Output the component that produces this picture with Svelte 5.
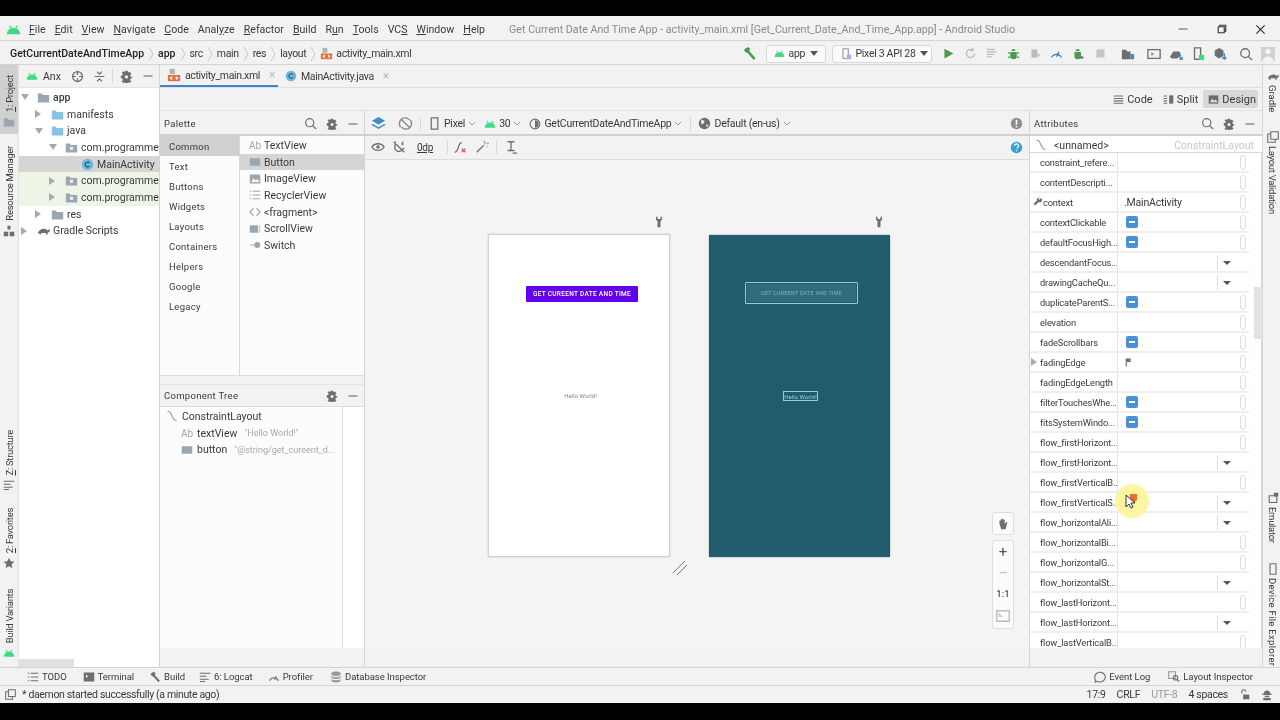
<script>
  const g = '#6e6e6e';
  // every icon is a list of [path, fill, stroke] on a 16x16 box
  const icons = {
    android: [['M1 13a7 7 0 0 1 14 0z', '#3ddc84'], ['M4 4 5.500 6.500M12 4 10.500 6.500', 'none', '#3ddc84']],
    folder: [['M1 3h5l1 2h8v9H1z', '#9aa7b0']],
    blue: [['M1 3h5l1 2h8v9H1z', '#87c3e8']],
    pkg: [['M1 3h5l1 2h8v9H1z', '#9aa7b0'], ['M6 7h4v4H6z', '#e8ecee']],
    xml: [['M3 1h6v6H3z', '#b3b3b3'], ['M1 8h14v7H1z', '#e2703a'], ['M6 10 4 11.500 6 13M10 10l2 1.500L10 13', 'none', '#fff']],
    cls: [['M1 8a7 7 0 1 0 14 0a7 7 0 1 0-14 0', '#6db6dc'], ['M10.500 6a3 3 0 1 0 0 4', 'none', '#1f5f80']],
    target: [['M2 8a6 6 0 1 0 12 0a6 6 0 1 0-12 0M8 1v5M8 10v5M1 8h5M10 8h5', 'none', g]],
    collapse: [['M2 8h12M5 2l3 3 3-3M5 14l3-3 3 3', 'none', g]],
    gear: [['M6.500 1h3l.5 2 2-1 2 2.500-1.500 1.500.5 2 2 .5v1.500l-2 .5-.5 2 1.500 1.500-2 2-2-1-.5 2h-3l-.5-2-2 1-2-2 1.500-1.500-.5-2-2-.5V7l2-.5.5-2L2 3l2-1.500 2 1z', g], ['M6 8.500a2 2 0 1 0 4 0a2 2 0 1 0-4 0', '#f2f2f2']],
    minus: [['M2 8h12', 'none', g]],
    search: [['M2 7a5 5 0 1 0 10 0a5 5 0 1 0-10 0M10.500 10.500 15 15', 'none', g]],
    hammer: [['M2 4 6 1l3 2-1.500 2 7 8-2 2-7-8L4 7z', '#4c9a4c']],
    hammerg: [['M2 4 6 1l3 2-1.500 2 7 8-2 2-7-8L4 7z', g]],
    play: [['M3 2 14 8 3 14z', '#4c9a4c']],
    rerun: [['M13 8a5 5 0 1 1-2-4M11 1v3.500H7.500', 'none', '#bbb']],
    lines: [['M2 3h10M2 6h12M2 9h9M2 12h7', 'none', '#bbb']],
    bug: [['M4 6h8v5a4 4 0 0 1-8 0zM5.500 5a2.500 2.500 0 0 1 5 0z', '#4c9a4c'], ['M1 7l3 1M15 7l-3 1M1 13l3-1M15 13l-3-1', 'none', '#4c9a4c']],
    attach: [['M3 3h7v10H3z', '#bbb'], ['M10 7l5 3-5 3z', '#ccc']],
    gauge: [['M2 13a6.500 6.500 0 0 1 12 0M8 12l3-6', 'none', '#2f7fb5']],
    gaugeg: [['M2 13a6.500 6.500 0 0 1 12 0M9 12l2-5', 'none', g]],
    bugrun: [['M3 6h8v5a4 4 0 0 1-8 0zM4.500 5a2.500 2.500 0 0 1 5 0z', '#4c9a4c'], ['M10 10l5 3-4 2z', g]],
    stop: [['M3 3h10v10H3z', '#c6c6c6']],
    struct: [['M1 3h5l1 2h4v9H1z', g], ['M11 8h4v6h-4z', '#3b8fc4']],
    term: [['M1 3h14v10H1z', 'none', g], ['M5 6l3 2-3 2z', '#3b8fc4']],
    sync: [['M1 11l4-6h7l2 5-5 3H3z', g], ['M10 9l5 5M15 11v3h-3', 'none', '#3b8fc4']],
    device: [['M4 1h7v13H4z', 'none', g], ['M9 9h6v6H9z', '#3ddc84']],
    devgrey: [['M4 1h7v13H4z', 'none', '#999'], ['M9 9h6v6H9z', '#aab4e0']],
    emu: [['M3 5h10v9H3z', 'none', g], ['M9 1h6v5H9z', g]],
    sdk: [['M2 4l5-3 5 3v6l-5 3-5-3z', g], ['M13 7v7M10.500 11.500 13 14l2.500-2.500', 'none', '#3b8fc4']],
    user: [['M0 0h16v16H0z', '#d0d0d0'], ['M5 5a3 3 0 1 0 6 0a3 3 0 1 0-6 0M2 16c0-7 12-7 12 0z', '#f4f4f4']],
    layers: [['M8 1l7 4-7 4-7-4z', '#3b8fc4'], ['M1 9l7 4 7-4', 'none', '#3b8fc4']],
    rotate: [['M3 12a6 6 0 0 1 9-8M13 4a6 6 0 0 1-9 8M4 4l8 8', 'none', '#888']],
    phone: [['M4 1h8v14H4z', 'none', g]],
    theme: [['M1.500 8a6.500 6.500 0 1 0 13 0a6.500 6.500 0 1 0-13 0', 'none', g], ['M8 3a5 5 0 0 1 0 10z', g]],
    globe: [['M1 8a7 7 0 1 0 14 0a7 7 0 1 0-14 0', g], ['M4 3l4 2-1 3-3 1zM10 9l3 1-2 3z', '#f2f2f2']],
    eye: [['M1 8c3-5 11-5 14 0c-3 5-11 5-14 0z', 'none', g], ['M6 8a2 2 0 1 0 4 0a2 2 0 1 0-4 0', g]],
    magnet: [['M4 2l-1 7a5 5 0 0 0 8 3l3-3M2 2l12 12', 'none', g], ['M11 2h2v4h-2z', '#3b8fc4']],
    curve: [['M2 14c5 0 3-11 8-11', 'none', g], ['M10 10l4 4M14 10l-4 4', 'none', '#d9534f']],
    wand: [['M2 14l8-8', 'none', g], ['M11 2v3M13 4h3M10 1l1 1M13 7l1 1', 'none', '#8bbf8b']],
    margin: [['M4 2h8M8 2v10M4 12h8M10 15h5', 'none', g]],
    info: [['M1 8a7 7 0 1 0 14 0a7 7 0 1 0-14 0', '#8c8c8c'], ['M7 3.500h2v6H7zM7 11h2v2H7z', '#fff']],
    help: [['M1 8a7 7 0 1 0 14 0a7 7 0 1 0-14 0', '#389fd6'], ['M5.500 6a2.500 2.500 0 1 1 3.500 2.300V9.500M8 11v1.500', 'none', '#fff']],
    widget: [['M1 3h14v10H1z', '#9aa7b0']],
    image: [['M1 2h14v12H1z', '#9aa7b0'], ['M3 12l3-5 3 3 2-2 3 4z', '#fff']],
    designico: [['M1 2h14v12H1z', g], ['M3 12l3-5 3 3 2-2 3 4z', '#e4e4e4']],
    list: [['M5 3h10M5 8h10M5 13h10M1 3h2M1 8h2M1 13h2', 'none', '#9aa7b0']],
    code: [['M6 3 1 8l5 5M10 3l5 5-5 5', 'none', '#9aa7b0']],
    scroll: [['M1 3h11v10H1z', '#9aa7b0'], ['M13 3h2v10h-2z', '#c3ccd2']],
    toggle: [['M1 7h8v2H1z', '#c3ccd2'], ['M7 8a4 4 0 1 0 8 0a4 4 0 1 0-8 0', '#9aa7b0']],
    constraint: [['M2 2h2c3 0 2 4 4 6s1 6 6 6', 'none', '#8a9aa5']],
    wrench: [['M14 2l-3 3-2-2 3-2a4 4 0 0 0-5 5L1 12l3 3 6-6a4 4 0 0 0 4-7z', g]],
    flag: [['M3 1h10l-2 3 2 3H5v8H3z', g]],
    tortoise: [['M1 12c1-6 9-8 12-4l2-2 1 3-3 2v2h-2v-2H5v2H3v-2z', g]],
    resource: [['M6 1h4v5H6zM1 9h6v6H1zM9 9h6v6H9z', g]],
    star: [['M8 1l2.200 4.700 5 .6-3.700 3.400 1 5L8 12.300 3.500 14.700l1-5L.8 6.300l5-.6z', g]],
    hand: [['M4 8V4h1.500v3V2.500H7V7V2h1.500v5V3H10v5l1.500-2H13l-2 8H6z', g]],
    fit: [['M1 2h14v12H1z', 'none', '#bbb'], ['M3 4l5 5H3z', '#ccc']],
    wrenchv: [['M4 1v4l2 2v8h4V7l2-2V1h-2v3H6V1z', g]],
    todo: [['M1 3h2M1 8h2M1 13h2M5 3h10M5 8h10M5 13h10', 'none', g]],
    burger: [['M1 3h14M1 6.500h14M1 10h14M1 13.500h14', 'none', g]],
    split: [['M1 3h5M1 6.500h5M1 10h5M1 13.500h5', 'none', g], ['M9 2h6v12H9z', g]],
    termb: [['M1 2h14v12H1z', g], ['M4 5l3 2-3 2z', '#fff']],
    logcat: [['M1 3h14M1 7h9M1 11h12M1 14h7', 'none', g]],
    db: [['M2 3c0-3 12-3 12 0v10c0 3-12 3-12 0z', '#9a9a9a'], ['M2 6c3 2 9 2 12 0M2 10c3 2 9 2 12 0', 'none', '#f2f2f2']],
    log: [['M1 8a7 6.500 0 1 1 3 5.500L2 15z', 'none', g]],
    inspect: [['M1 1h9v9H1z', 'none', '#999'], ['M7 9a3 3 0 1 0 6 0a3 3 0 1 0-6 0M12 11l3 3', 'none', g]],
    copy: [['M5 1h10v10H5zM5 4H1v11h10v-4', 'none', g]],
    lock: [['M4 7V4a3 3 0 0 1 6 0', 'none', g], ['M6 8h9v7H6z', g]],
    hector: [['M4 6a4 4 0 0 1 8 0zM2 6h12v2H2zM5 9h6v2H5zM3 12h10v3H3z', g]],
    win: [['M3 5h8v8H3z', 'none', '#333'], ['M5 5V3h8v8h-2', 'none', '#333']],
    close: [['M2 2l12 12M14 2 2 14', 'none', '#222']]
  };

  const menu = [['', 'F', 'ile'], ['', 'E', 'dit'], ['', 'V', 'iew'], ['', 'N', 'avigate'], ['', 'C', 'ode'], ['Anal', 'y', 'ze'], ['', 'R', 'efactor'], ['', 'B', 'uild'], ['R', 'u', 'n'], ['', 'T', 'ools'], ['VC', 'S', ''], ['', 'W', 'indow'], ['', 'H', 'elp']];
  const crumbs = ['src', 'main', 'res', 'layout'];
  const runIcons = ['play', 'rerun', 'lines', 'bug', 'attach', 'gauge', 'bugrun', 'stop'];
  const toolIcons = ['struct', 'term', 'sync', 'device', 'sdk'];

  const tree = [
    { label: 'app', indent: 6, arrow: 'open', icon: 'folder', bold: true },
    { label: 'manifests', indent: 20, arrow: 'closed', icon: 'blue' },
    { label: 'java', indent: 20, arrow: 'open', icon: 'blue' },
    { label: 'com.programmer', indent: 34, arrow: 'open', icon: 'pkg' },
    { label: 'MainActivity', indent: 50, icon: 'cls', sel: true },
    { label: 'com.programmer', indent: 34, arrow: 'closed', icon: 'pkg', test: true },
    { label: 'com.programmer', indent: 34, arrow: 'closed', icon: 'pkg', test: true },
    { label: 'res', indent: 20, arrow: 'closed', icon: 'folder' },
    { label: 'Gradle Scripts', indent: 6, arrow: 'closed', icon: 'tortoise' }
  ];
  const categories = ['Common', 'Text', 'Buttons', 'Widgets', 'Layouts', 'Containers', 'Helpers', 'Google', 'Legacy'];
  const widgets = [['TextView', 'abc'], ['Button', 'widget'], ['ImageView', 'image'], ['RecyclerView', 'list'], ['<fragment>', 'code'], ['ScrollView', 'scroll'], ['Switch', 'toggle']];

  const P = 'pill', D = 'drop', T = 'toggle';
  const attrs = [
    ['constraint_refere...', P], ['contentDescripti...', P], ['context', P, '.MainActivity'], ['contextClickable', T],
    ['defaultFocusHigh...', T], ['descendantFocus...', D], ['drawingCacheQu...', D], ['duplicateParentS...', T],
    ['elevation', P], ['fadeScrollbars', T], ['fadingEdge', 'flag'], ['fadingEdgeLength', P],
    ['filterTouchesWhe...', T], ['fitsSystemWindo...', T], ['flow_firstHorizont...', P], ['flow_firstHorizont...', D],
    ['flow_firstVerticalB...', P], ['flow_firstVerticalS...', D], ['flow_horizontalAli...', D], ['flow_horizontalBi...', P],
    ['flow_horizontalG...', P], ['flow_horizontalSt...', D], ['flow_lastHorizont...', P], ['flow_lastHorizont...', D],
    ['flow_lastVerticalB...', P]
  ];
  const bottomLeft = [['todo', 'TODO', 8], ['termb', 'Terminal', 16], ['hammerg', 'Build', 15], ['logcat', '6: Logcat', 14], ['gaugeg', 'Profiler', 15], ['db', 'Database Inspector', 17]];
</script>

{#snippet ico(name, size = 14)}
  <svg class="ico" width={size} height={size} viewBox="0 0 16 16" stroke-width="1.500">
    {#each icons[name] as [d, fill, stroke]}
      <path {d} {fill} stroke={stroke || 'none'} />
    {/each}
  </svg>
{/snippet}

{#snippet chevron()}
  <svg class="ico" width="8" height="5" viewBox="0 0 8 5"><path d="M1 1l3 3 3-3" fill="none" stroke="#999" /></svg>
{/snippet}

{#snippet navsep()}
  <svg class="ico sep" width="6" height="16" viewBox="0 0 6 16"><path d="M1 1l4 7-4 7" fill="none" stroke="#c8c8c8" /></svg>
{/snippet}

<div class="window">
  <header class="menubar">
    <span class="logo">{@render ico('android', 15)}</span>
    {#each menu as [a, u, b]}
      <span class="menuitem">{a}<u>{u}</u>{b}</span>
    {/each}
    <span class="title">Get Current Date And Time App - activity_main.xml [Get_Current_Date_And_Time_App.app] - Android Studio</span>
    <div class="winctl">
      <span>{@render ico('minus', 12)}</span>
      <span>{@render ico('win', 12)}</span>
      <span>{@render ico('close', 11)}</span>
    </div>
  </header>

  <nav class="navbar">
    <b>GetCurrentDateAndTimeApp</b>{@render navsep()}
    <b>app</b>{@render navsep()}
    {#each crumbs as c}
      <span class="crumb">{c}</span>{@render navsep()}
    {/each}
    {@render ico('xml', 13)}<span class="crumb xmlname">activity_main.xml</span>
    <div class="runbar">
      <span class="hammer">{@render ico('hammer', 15)}</span>
      <div class="combo app-combo">{@render ico('android', 11)}<span>app</span><i class="tri"></i></div>
      <div class="combo dev-combo">{@render ico('devgrey', 12)}<span>Pixel 3 API 28</span><i class="tri"></i></div>
      <div class="iconrow run">{#each runIcons as n}<span>{@render ico(n, 13)}</span>{/each}</div>
      <div class="iconrow tools">{#each toolIcons as n, i}<span class:wide={i === 0}>{@render ico(n, 14)}</span>{/each}</div>
      <span class="navsearch">{@render ico('search', 14)}</span>
      {@render ico('user', 14)}
    </div>
  </nav>

  <main class="middle">
    <aside class="stripe left">
      <div class="vtab active">{@render ico('folder', 12)}<span><u>1</u>: Project</span></div>
      <div class="vtab res">{@render ico('resource', 12)}<span>Resource Manager</span></div>
      <div class="vtab struct">{@render ico('logcat', 12)}<span><u>Z</u>: Structure</span></div>
      <div class="vtab fav">{@render ico('star', 12)}<span><u>2</u>: Favorites</span></div>
      <div class="vtab var">{@render ico('android', 12)}<span>Build Variants</span></div>
    </aside>

    <section class="project">
      <div class="projhead">
        {@render ico('android', 12)}
        <span class="projname">Anx</span>
        <span class="projicons">
          {@render ico('target', 13)}
          {@render ico('collapse', 13)}
          <i class="vline"></i>
          {@render ico('gear', 13)}
          {@render ico('minus', 12)}
        </span>
      </div>
      <div class="tree">
        {#each tree as row}
          <div class="treerow" class:sel={row.sel} class:test={row.test} class:bold={row.bold} style="padding-left:{row.indent}px">
            <span class="arrow {row.arrow || ''}"></span>
            {@render ico(row.icon, 13)}
            <span class="treelabel">{row.label}</span>
          </div>
        {/each}
      </div>
      <div class="hscroll"></div>
    </section>

    <section class="editor">
      <div class="tabs">
        <div class="tab current">{@render ico('xml', 14)}<span>activity_main.xml</span><em>×</em></div>
        <div class="tab">{@render ico('cls', 12)}<span>MainActivity.java</span><em>×</em></div>
      </div>
      <div class="modes">
        <span class="mode">{@render ico('burger', 11)}Code</span>
        <span class="mode">{@render ico('split', 11)}Split</span>
        <span class="mode on">{@render ico('designico', 11)}Design</span>
      </div>

      <div class="workspace">
        <div class="leftcol">
          <div class="palette">
            <div class="panelhead">
              <span class="paneltitle">Palette</span>
              <span class="panelicons">{@render ico('search', 13)}{@render ico('gear', 12)}{@render ico('minus', 12)}</span>
            </div>
            <div class="palbody">
              <ul class="cats">
                {#each categories as c, i}<li class:on={i === 0}>{c}</li>{/each}
              </ul>
              <ul class="widgets">
                {#each widgets as [w, n], i}
                  <li class:on={i === 1}>{#if n === 'abc'}<span class="ab">Ab</span>{:else}{@render ico(n, 12)}{/if}<span>{w}</span></li>
                {/each}
              </ul>
            </div>
          </div>
          <div class="comptree">
            <div class="panelhead">
              <span class="paneltitle">Component Tree</span>
              <span class="panelicons">{@render ico('gear', 12)}{@render ico('minus', 12)}</span>
            </div>
            <div class="compbody">
              <div class="complist">
                <div class="comprow root">{@render ico('constraint', 12)}<span>ConstraintLayout</span></div>
                <div class="comprow"><span class="ab">Ab</span><span>textView</span><small>"Hello World!"</small></div>
                <div class="comprow">{@render ico('widget', 12)}<span>button</span><small>"@string/get_cureent_d...</small></div>
              </div>
              <div class="compside"></div>
            </div>
          </div>
        </div>

        <div class="design">
          <div class="dbar">
            <span class="dgroup first">{@render ico('layers', 15)}{@render ico('rotate', 15)}</span>
            <i class="vline"></i>
            <span class="ditem">{@render ico('phone', 13)}Pixel{@render chevron()}</span>
            <span class="ditem">{@render ico('android', 12)}30{@render chevron()}</span>
            <span class="ditem">{@render ico('theme', 12)}GetCurrentDateAndTimeApp{@render chevron()}</span>
            <i class="vline"></i>
            <span class="ditem">{@render ico('globe', 13)}Default (en-us){@render chevron()}</span>
            <span class="dright">{@render ico('info', 13)}</span>
          </div>
          <div class="dbar second">
            <span class="dgroup first">{@render ico('eye', 14)}{@render ico('magnet', 14)}</span>
            <span class="zerodp">0dp</span>
            <i class="vline pull"></i>
            <span class="dgroup">{@render ico('curve', 14)}{@render ico('wand', 14)}</span>
            <i class="vline"></i>
            {@render ico('margin', 14)}
            <span class="dright">{@render ico('help', 13)}</span>
          </div>
          <div class="canvas">
            <div class="pin p1">{@render ico('wrenchv', 12)}</div>
            <div class="pin p2">{@render ico('wrenchv', 12)}</div>
            <div class="phonebox light">
              <div class="appbtn">GET CUREENT DATE AND TIME</div>
              <div class="hello">Hello World!</div>
            </div>
            <div class="phonebox blueprint">
              <div class="appbtn">GET CUREENT DATE AND TIME</div>
              <div class="hello">Hello World!</div>
            </div>
            <svg class="resizer" width="16" height="16" viewBox="0 0 16 16"><path d="M1 13 13 1M5 15 15 5" stroke="#777" fill="none" /></svg>
            <div class="zoombox hand">{@render ico('hand', 14)}</div>
            <div class="zoombox zoom">
              <span class="plus">+</span>
              <span class="dash">–</span>
              <span class="one">1:1</span>
              {@render ico('fit', 14)}
            </div>
          </div>
        </div>

        <div class="attributes">
          <div class="panelhead">
            <span class="paneltitle">Attributes</span>
            <span class="panelicons">{@render ico('search', 13)}{@render ico('gear', 12)}{@render ico('minus', 12)}</span>
          </div>
          <div class="unnamed">{@render ico('constraint', 12)}<span>&lt;unnamed&gt;</span><em>ConstraintLayout</em></div>
          <div class="attrwrap">
            <div class="attrlist">
              {#each attrs as [name, kind, value]}
                <div class="attrrow">
                  <div class="attrname">
                    {#if value}<span class="wr">{@render ico('wrench', 9)}</span>{/if}
                    {#if kind === 'flag'}<span class="expand"></span>{/if}
                    <span>{name}</span>
                  </div>
                  <div class="attrvalue">
                    {#if value}<span class="val">{value}</span>{/if}
                    {#if kind === T}<span class="tog"></span>{/if}
                    {#if kind === 'flag'}<span class="flag">{@render ico('flag', 9)}</span>{/if}
                    {#if kind === D}
                      <span class="drop"><i class="tri small"></i></span>
                    {:else}
                      <span class="pillmark"></span>
                    {/if}
                  </div>
                </div>
              {/each}
            </div>
            <div class="vscroll"><i></i></div>
          </div>
          <div class="attrfoot"></div>
        </div>
      </div>
    </section>

    <aside class="stripe right">
      <div class="rtab gradle">{@render ico('tortoise', 12)}<span>Gradle</span></div>
      <div class="rtab valid">{@render ico('copy', 12)}<span>Layout Validation</span></div>
      <div class="rtab emu">{@render ico('emu', 12)}<span>Emulator</span></div>
      <div class="rtab dfe">{@render ico('phone', 12)}<span>Device File Explorer</span></div>
    </aside>
  </main>

  <div class="toolbar">
    {#each bottomLeft as [n, t, gap]}
      <span class="tw" style="margin-left:{gap}px">{@render ico(n, 12)}{t}</span>
    {/each}
    <span class="twright">
      <span class="tw">{@render ico('log', 12)}Event Log</span>
      <span class="tw li">{@render ico('inspect', 12)}Layout Inspector</span>
    </span>
  </div>

  <footer class="status">
    {@render ico('copy', 11)}
    <span class="msg">* daemon started successfully (a minute ago)</span>
    <span class="stright">
      <span>17:9</span><span>CRLF</span><span class="dim">UTF-8</span><span>4 spaces</span>
      {@render ico('lock', 11)}
      {@render ico('hector', 12)}
    </span>
  </footer>

  <div class="cursorspot">
    <svg width="18" height="18" viewBox="0 0 18 18">
      <path d="M7 2h7v6l-3.500 3L7 8z" fill="#e8702a" />
      <path d="M3 3v12l3-3 2 4 2-1-2-4h4z" fill="#fff" stroke="#333" />
    </svg>
  </div>
</div>

<style>
  :global(body) { background: #000; }
  * { box-sizing: border-box; }
  ul { list-style: none; margin: 0; padding: 0; }
  .ico { flex: none; display: block; }

  .window {
    position: relative;
    margin-top: 16px;
    width: 1280px;
    height: 687px;
    display: flex;
    flex-direction: column;
    overflow: hidden;
    background: #f2f2f2;
    color: #3a3a3a;
    font-family: Roboto, "Noto Sans", sans-serif;
    font-size: 10.500px;
    filter: blur(.3px);
  }

  .menubar {
    height: 25px;
    flex: none;
    display: flex;
    align-items: center;
    padding: 2px 0 0 6px;
    border-bottom: 1px solid #d4d4d4;
    font-size: 10.600px;
  }
  .logo { width: 23px; }
  .menuitem { margin-right: 9px; white-space: nowrap; }
  .title { margin-left: 15px; color: #8a8a8a; white-space: nowrap; font-size: 10.700px; }
  .winctl { margin-left: auto; display: flex; align-items: center; padding-right: 14px; }
  .winctl span { margin-left: 27px; }

  .navbar {
    height: 24px;
    flex: none;
    display: flex;
    align-items: center;
    padding: 2px 0 0 10px;
    border-bottom: 1px solid #d4d4d4;
    white-space: nowrap;
  }
  .navbar b { font-weight: 500; color: #222; }
  .crumb { letter-spacing: -.35px; }
  .sep { margin: 0 4px 0 4px; }
  .xmlname { margin-left: 3px; }
  .runbar { margin-left: auto; display: flex; align-items: center; padding-right: 5px; }
  .hammer { margin-right: 9px; }
  .combo {
    height: 18px;
    display: flex;
    align-items: center;
    gap: 4px;
    padding: 0 7px;
    background: #fafafa;
    border: 1px solid #d8d8d8;
    border-radius: 3px;
    font-size: 10.500px;
    letter-spacing: -.3px;
    margin-right: 6px;
  }
  .app-combo { width: 60px; }
  .dev-combo { width: 100px; }
  .tri { display: block; margin-left: auto; width: 0; height: 0; border-left: 4px solid transparent; border-right: 4px solid transparent; border-top: 5px solid #555; }
  .tri.small { border-width: 4px 4px 0; margin: 0; }
  .iconrow { display: flex; align-items: center; }
  .run span { width: 21.700px; display: flex; justify-content: center; }
  .tools { margin-left: 6px; }
  .tools span { width: 22px; display: flex; justify-content: center; }
  .tools .wide { margin-right: 4px; }
  .navsearch { margin: 0 8px 0 8px; }

  .middle { flex: 1; min-height: 0; display: flex; }
  .stripe { flex: none; position: relative; background: #f2f2f2; font-size: 9.500px; }
  .stripe.left { width: 19px; border-right: 1px solid #e2e2e2; letter-spacing: -.3px; }
  .stripe.right { width: 18px; border-left: 1px solid #d8d8d8; }
  .vtab { position: absolute; left: 0; width: 18px; display: flex; flex-direction: column-reverse; align-items: center; gap: 4px; padding: 3px 0; }
  .vtab span { writing-mode: vertical-rl; transform: rotate(180deg); white-space: nowrap; }
  .vtab.active { top: 0; height: 69px; background: #d0d0d0; padding-top: 10px; justify-content: flex-end; }
  .vtab.res { top: 78px; }
  .vtab.struct { top: 362px; }
  .vtab.fav { top: 440px; }
  .vtab.var { top: 521px; }
  .rtab { position: absolute; left: 1px; width: 17px; display: flex; flex-direction: column; align-items: center; gap: 3px; }
  .rtab span { writing-mode: vertical-rl; white-space: nowrap; }
  .rtab.gradle { top: 5px; }
  .rtab.valid { top: 66px; letter-spacing: -.3px; }
  .rtab.emu { top: 427px; letter-spacing: -.3px; }
  .rtab.dfe { top: 498px; letter-spacing: .3px; }

  .project { width: 141px; flex: none; display: flex; flex-direction: column; background: #fff; border-right: 1px solid #d4d4d4; position: relative; }
  .projhead { height: 23px; flex: none; display: flex; align-items: center; padding-left: 7px; background: #f2f2f2; border-bottom: 1px solid #e4e4e4; }
  .projname { margin-left: 5px; }
  .projicons { margin-left: 10px; display: flex; align-items: center; gap: 9px; }
  .projicons .vline { margin: 0 -2.500px; }
  .vline { display: block; width: 1px; height: 14px; background: #d8d8d8; flex: none; }
  .vline.pull { margin-right: -2px; }
  .tree { flex: 1; padding-top: 1px; overflow: hidden; }
  .treerow { height: 16.700px; display: flex; align-items: center; white-space: nowrap; }
  .treerow.sel { background: #d5d5d5; }
  .treerow.test { background: #eef5e6; }
  .treerow.bold { font-weight: 500; }
  .arrow { width: 16px; height: 10px; margin-left: -4px; flex: none; position: relative; }
  .arrow.closed::before { content: ""; position: absolute; left: 0; top: 1px; border-left: 6px solid #a8a8a8; border-top: 4px solid transparent; border-bottom: 4px solid transparent; }
  .arrow.open::before { content: ""; position: absolute; left: 0; top: 2px; border-top: 6px solid #a8a8a8; border-left: 4px solid transparent; border-right: 4px solid transparent; }
  .treelabel { margin-left: 3px; }
  .hscroll { position: absolute; left: 0; bottom: 0; width: 55px; height: 8px; background: #e0e0e0; }

  .editor { flex: 1; min-width: 0; display: flex; flex-direction: column; }
  .tabs { height: 23px; flex: none; display: flex; border-bottom: 1px solid #e0e0e0; }
  .tab { height: 22px; display: flex; align-items: center; gap: 4px; padding: 0 7px; letter-spacing: -.35px; }
  .tab em { font-style: normal; color: #bbb; font-size: 12px; margin-left: 5px; }
  .tab.current { width: 118px; border-bottom: 2px solid #4083c9; }
  .modes { height: 23px; flex: none; display: flex; justify-content: flex-end; align-items: center; padding-right: 4px; border-bottom: 1px solid #e0e0e0; font-size: 11px; }
  .mode { display: flex; align-items: center; gap: 3px; padding: 0 5px; height: 18px; border-radius: 2px; }
  .mode.on { background: #d8d8d8; padding-right: 2px; }

  .workspace { flex: 1; min-height: 0; display: flex; }
  .leftcol { width: 205px; flex: none; display: flex; flex-direction: column; border-right: 1px solid #d4d4d4; padding-bottom: 19px; }
  .panelhead { height: 25px; flex: none; display: flex; align-items: center; padding: 2px 0 0 4px; border-bottom: 2px solid #d0d0d0; }
  .paneltitle { font-size: 9.500px; letter-spacing: .3px; }
  .panelicons { margin-left: auto; display: flex; align-items: center; gap: 9px; padding-right: 5px; }
  .palette { height: 265px; flex: none; background: #fff; display: flex; flex-direction: column; border-bottom: 1px solid #dcdcdc; }
  .palette .panelhead, .comptree .panelhead, .attributes .panelhead { background: #f2f2f2; }
  .palbody { flex: 1; display: flex; min-height: 0; background: #fcfcfc; }
  .cats { width: 80px; flex: none; border-right: 1px solid #d8d8d8; font-size: 9.500px; letter-spacing: .25px; }
  .cats li { height: 20px; padding-left: 9px; display: flex; align-items: center; }
  .cats li.on { background: #d0d0d0; }
  .widgets { flex: 1; padding-top: 1px; }
  .widgets li { height: 16.700px; display: flex; align-items: center; gap: 3px; padding-left: 9px; }
  .widgets li.on { background: #d5d5d5; }
  .ab { color: #a0a8ad; width: 12px; font-size: 10px; flex: none; }
  .comptree { flex: 1; min-height: 0; margin-top: 8px; display: flex; flex-direction: column; background: #fcfcfc; border-top: 1px solid #e4e4e4; }
  .comptree .panelhead { height: 22px; padding-top: 0; border-bottom: 1px solid #dcdcdc; }
  .compbody { flex: 1; display: flex; min-height: 0; }
  .complist { width: 183px; flex: none; border-right: 1px solid #dedede; padding-top: 1px; }
  .compside { flex: 1; background: #fff; }
  .comprow { height: 16.700px; display: flex; align-items: center; gap: 4px; padding-left: 21px; white-space: nowrap; }
  .comprow.root { padding-left: 6px; }
  .comprow small { font-size: 9px; color: #a8a8a8; margin-left: 3px; }

  .design { flex: 1; min-width: 0; display: flex; flex-direction: column; position: relative; }
  .dbar { height: 25px; flex: none; display: flex; align-items: center; gap: 7px; padding-top: 2px; border-bottom: 2px solid #d0d0d0; white-space: nowrap; letter-spacing: -.25px; }
  .dbar.second { height: 24px; padding: 0 0 1px; border-bottom-width: 1px; border-bottom-color: #dcdcdc; }
  .dgroup { display: flex; align-items: center; gap: 8px; }
  .dgroup.first { padding-left: 6px; gap: 12px; }
  .second .dgroup.first { gap: 7px; }
  .ditem { display: flex; align-items: center; gap: 3px; margin-right: 1px; }
  .dright { margin-left: auto; padding-right: 6px; }
  .zerodp { font-size: 10px; text-decoration: underline; margin-left: 4px; width: 23px; }
  .canvas { flex: 1; min-height: 0; margin-bottom: 19px; position: relative; background: #f4f4f4; overflow: hidden; }
  .pin { position: absolute; top: 56px; }
  .p1 { left: 288px; }
  .p2 { left: 508px; }
  .phonebox { position: absolute; top: 74px; height: 323px; width: 182px; }
  .phonebox .appbtn { position: absolute; left: 37px; top: 51px; width: 112px; height: 16px; display: flex; align-items: center; justify-content: center; font-family: Roboto, sans-serif; font-size: 6.500px; letter-spacing: .3px; white-space: nowrap; border-radius: 1px; font-weight: 500; }
  .phonebox .hello { position: absolute; left: 74px; top: 157px; width: 35px; font-family: Roboto, sans-serif; font-size: 6px; text-align: center; white-space: nowrap; }
  .light { left: 123px; background: #fff; border: 1px solid #d0d0d0; box-shadow: 0 0 2px #ccc; }
  .light .appbtn { background: #6200ee; color: #fff; }
  .light .hello { color: #888; }
  .blueprint { left: 344px; top: 75px; height: 322px; width: 181px; background: #215c6e; box-shadow: 0 0 2px #9cb5bf; }
  .blueprint .appbtn { left: 36px; top: 47px; width: 113px; height: 22px; background: #2f6c7e; color: #7fb6c4; border: 1px solid #8fcfdc; font-weight: 400; font-size: 5.300px; box-shadow: inset 0 0 0 1px #215c6e; }
  .blueprint .hello { left: 74px; top: 156px; width: 35px; height: 10px; line-height: 9px; border: 1px solid #8fcfdc; color: #8fcfdc; }
  .resizer { position: absolute; left: 307px; top: 400px; }
  .zoombox { position: absolute; left: 627px; width: 22px; background: #fbfbfb; border: 1px solid #dedede; border-radius: 3px; display: flex; flex-direction: column; align-items: center; }
  .hand { top: 352px; height: 23px; justify-content: center; }
  .zoom { top: 380px; height: 89px; padding-top: 1px; color: #555; }
  .plus { font-size: 15px; line-height: 20px; }
  .dash { font-size: 14px; line-height: 22px; color: #bbb; }
  .one { font-size: 9.500px; font-weight: 500; line-height: 20px; margin-bottom: 5px; }

  .attributes { width: 233px; flex: none; display: flex; flex-direction: column; background: #f2f2f2; border-left: 1px solid #d4d4d4; }
  .attributes .panelicons { padding-right: 6px; }
  .unnamed { height: 17px; flex: none; display: flex; align-items: center; gap: 7px; padding: 2px 0 0 5px; background: #fff; border-bottom: 1px solid #d8d8d8; white-space: nowrap; }
  .unnamed em { margin-left: auto; font-style: normal; color: #c8c8c8; padding-right: 8px; }
  .attrwrap { flex: 1; min-height: 0; display: flex; background: #fff; overflow: hidden; }
  .attrlist { width: 219px; flex: none; }
  .attrrow { height: 20px; display: flex; border-bottom: 2px solid #eee; }
  .attrname { width: 88px; flex: none; display: flex; align-items: center; padding-left: 10px; position: relative; border-right: 1px solid #e4e4e4; white-space: nowrap; overflow: hidden; font-size: 9.300px; letter-spacing: -.15px; }
  .wr { position: absolute; left: 3px; top: 4px; }
  .attrname:has(.wr) { padding-left: 13px; }
  .expand { position: absolute; left: 1px; top: 5px; border-left: 6px solid #aaa; border-top: 4px solid transparent; border-bottom: 4px solid transparent; }
  .attrvalue { flex: 1; position: relative; display: flex; align-items: center; }
  .val { margin-left: 6px; letter-spacing: -.2px; }
  .tog { position: absolute; left: 8px; top: 3px; width: 12px; height: 12px; border-radius: 2px; background: #4a90d2; }
  .tog::after { content: ""; position: absolute; left: 3px; top: 5px; width: 6px; height: 2px; background: #fff; }
  .flag { position: absolute; left: 6px; top: 5px; }
  .pillmark { position: absolute; right: 3px; top: 2px; width: 6px; height: 15px; border: 1px solid #ddd; border-radius: 3px; }
  .drop { position: absolute; right: 0; top: 2px; width: 32px; height: 15px; border-left: 1px solid #ddd; display: flex; align-items: center; padding-left: 5px; }
  .vscroll { flex: 1; position: relative; border-right: 1px solid #d4d4d4; }
  .vscroll i { position: absolute; left: 5px; top: 134px; width: 8px; height: 52px; background: #e2e2e2; }
  .attrfoot { height: 19px; flex: none; }

  .toolbar { height: 19px; flex: none; display: flex; align-items: center; padding-left: 19px; border-top: 1px solid #d4d4d4; border-bottom: 1px solid #d4d4d4; font-size: 9.500px; letter-spacing: -.05px; white-space: nowrap; }
  .tw { display: flex; align-items: center; gap: 3px; }
  .twright { margin-left: auto; display: flex; align-items: center; padding-right: 27px; }
  .li { margin-left: 18px; }
  .status { height: 17px; flex: none; display: flex; align-items: center; padding-left: 5px; white-space: nowrap; }
  .msg { margin-left: 6px; letter-spacing: -.35px; }
  .stright { margin-left: auto; display: flex; align-items: center; gap: 11px; padding-right: 7px; letter-spacing: -.3px; }
  .dim { color: #9a9a9a; }

  .cursorspot { position: absolute; left: 1115px; top: 468px; width: 34px; height: 34px; border-radius: 50%; background: #fdf6a0; display: flex; align-items: center; justify-content: center; }
</style>
